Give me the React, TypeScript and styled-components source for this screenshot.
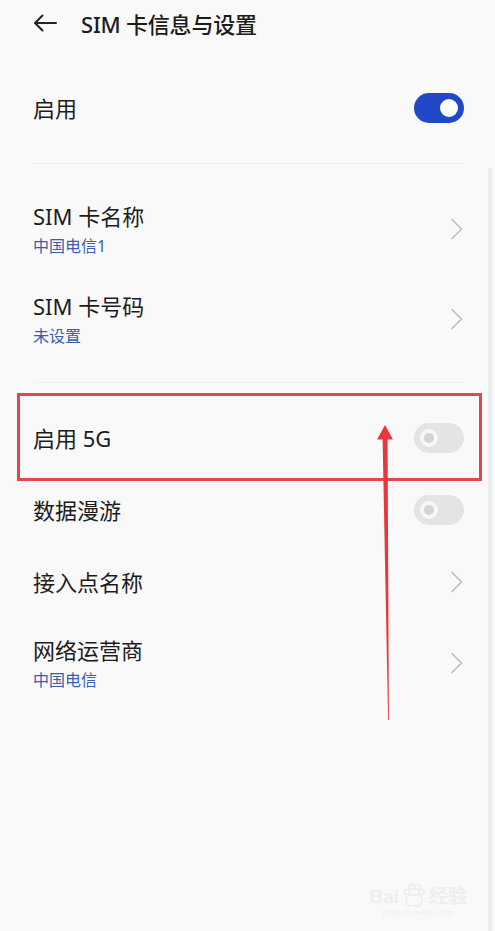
import styled, { createGlobalStyle } from 'styled-components';

const GlobalStyle = createGlobalStyle`
  html, body {
    margin: 0;
    padding: 0;
    background: #f9f9f9;
  }
  body {
    font-family: "Noto Sans", "Noto Sans CJK SC", sans-serif;
    color: #1c1c1c;
  }
`;

const Page = styled.div`
  position: relative;
  width: 495px;
  height: 931px;
  overflow: hidden;
  background: #f9f9f9;
`;

const Header = styled.header`
  height: 46px;
  display: flex;
  align-items: center;
  padding-left: 32px;
  gap: 23px;
`;

const Title = styled.h1`
  margin: 0;
  font-size: 22px;
  font-weight: 500;
  color: #1c1c1c;
  letter-spacing: -0.2px;
`;

const List = styled.div`
  display: flex;
  flex-direction: column;
  padding: 26px 31px 0 33px;
`;

const Row = styled.div<{ $double?: boolean; $highlight?: boolean }>`
  position: relative;
  height: ${({ $double }) => ($double ? 90 : 72)}px;
  display: flex;
  align-items: center;
  justify-content: space-between;

  ${({ $highlight }) =>
    $highlight &&
    `
    &::after {
      content: '';
      position: absolute;
      left: -16px;
      right: -18px;
      top: -9px;
      bottom: -7px;
      border: 3px solid #e2474a;
      pointer-events: none;
    }
  `}
`;

const Texts = styled.div`
  display: flex;
  flex-direction: column;
  gap: 7px;
`;

const Label = styled.span`
  font-size: 22px;
  line-height: 26px;
  color: #1c1c1c;
`;

const Sub = styled.span`
  font-size: 16px;
  line-height: 20px;
  color: #3a5dad;
`;

const Divider = styled.div<{ $faint?: boolean }>`
  height: 1px;
  background: ${({ $faint }) => ($faint ? '#f1f1f1' : '#ebebeb')};
  margin: ${({ $faint }) => ($faint ? '18px 0 19px' : '19px 0 20px')};
`;

const Switch = styled.div<{ $on?: boolean }>`
  width: 50px;
  height: 30px;
  border-radius: 15px;
  background: ${({ $on }) => ($on ? '#2148c6' : '#e4e4e4')};
  display: flex;
  align-items: center;
  justify-content: ${({ $on }) => ($on ? 'flex-end' : 'flex-start')};
  padding: 0 6px;
  box-sizing: border-box;
  flex-shrink: 0;
`;

const Knob = styled.div<{ $on?: boolean }>`
  width: 18px;
  height: 18px;
  border-radius: 50%;
  box-sizing: border-box;
  background: ${({ $on }) => ($on ? '#fff' : '#d3d3d3')};
  border: ${({ $on }) => ($on ? 'none' : '4px solid #f7f7f7')};
`;

const ScrollEdge = styled.div`
  position: absolute;
  right: 3px;
  top: 168px;
  bottom: 0;
  width: 4px;
  background: #ededed;
`;

const Watermark = styled.div`
  position: absolute;
  right: 28px;
  bottom: 14px;
  display: flex;
  flex-direction: column;
  align-items: center;
  color: #eeeeee;
  font-family: "Liberation Sans", "Noto Sans CJK SC", sans-serif;
`;

const MarkTop = styled.div`
  display: flex;
  align-items: flex-end;
  font-size: 19px;
  font-weight: 700;
  line-height: 20px;
  gap: 2px;
`;

const MarkUrl = styled.span`
  font-size: 9px;
  letter-spacing: 0.3px;
  font-family: "Liberation Serif", serif;
`;

const Arrow = styled.svg`
  position: absolute;
  left: 370px;
  top: 420px;
`;

const BackIcon = () => (
  <svg width="26" height="20" viewBox="0 0 26 20" fill="none">
    <path d="M24 10H3M10.5 2.5L3 10l7.5 7.5" stroke="#222" strokeWidth="2" strokeLinecap="round" strokeLinejoin="round" />
  </svg>
);

const Chevron = () => (
  <svg width="14" height="22" viewBox="0 0 14 22" fill="none">
    <path d="M2 1.5l9.5 9.5L2 20.5" stroke="#bdbdbd" strokeWidth="1.6" strokeLinecap="round" strokeLinejoin="round" />
  </svg>
);

const Toggle = ({ on }: { on?: boolean }) => (
  <Switch $on={on}>
    <Knob $on={on} />
  </Switch>
);

const Paw = () => (
  <svg width="26" height="24" viewBox="0 0 26 24" fill="none" stroke="#ebebeb" strokeWidth="1.4">
    <circle cx="6" cy="9" r="2.6" />
    <circle cx="10.5" cy="4" r="2.6" />
    <circle cx="16" cy="4" r="2.6" />
    <circle cx="20.5" cy="9" r="2.6" />
    <rect x="5" y="12" width="16" height="11" rx="5" />
  </svg>
);

export default function App() {
  return (
    <Page>
      <GlobalStyle />
      <Header>
        <BackIcon />
        <Title>SIM 卡信息与设置</Title>
      </Header>
      <List>
        <Row>
          <Label>启用</Label>
          <Toggle on />
        </Row>
        <Divider />
        <Row $double>
          <Texts>
            <Label>SIM 卡名称</Label>
            <Sub>中国电信1</Sub>
          </Texts>
          <Chevron />
        </Row>
        <Row $double>
          <Texts>
            <Label>SIM 卡号码</Label>
            <Sub>未设置</Sub>
          </Texts>
          <Chevron />
        </Row>
        <Divider $faint />
        <Row $highlight>
          <Label>启用 5G</Label>
          <Toggle />
        </Row>
        <Row>
          <Label>数据漫游</Label>
          <Toggle />
        </Row>
        <Row>
          <Label>接入点名称</Label>
          <Chevron />
        </Row>
        <Row $double>
          <Texts>
            <Label>网络运营商</Label>
            <Sub>中国电信</Sub>
          </Texts>
          <Chevron />
        </Row>
      </List>
      <ScrollEdge />
      <Arrow width="30" height="305" viewBox="0 0 30 305">
        <path d="M15 5L23 19.5H17.6L18.9 300H18.1L12.6 19.5H7Z" fill="#e8383d" />
      </Arrow>
      <Watermark>
        <MarkTop>
          <span>Bai</span>
          <Paw />
          <span>经验</span>
        </MarkTop>
        <MarkUrl>jingyan.baidu.com</MarkUrl>
      </Watermark>
    </Page>
  );
}
